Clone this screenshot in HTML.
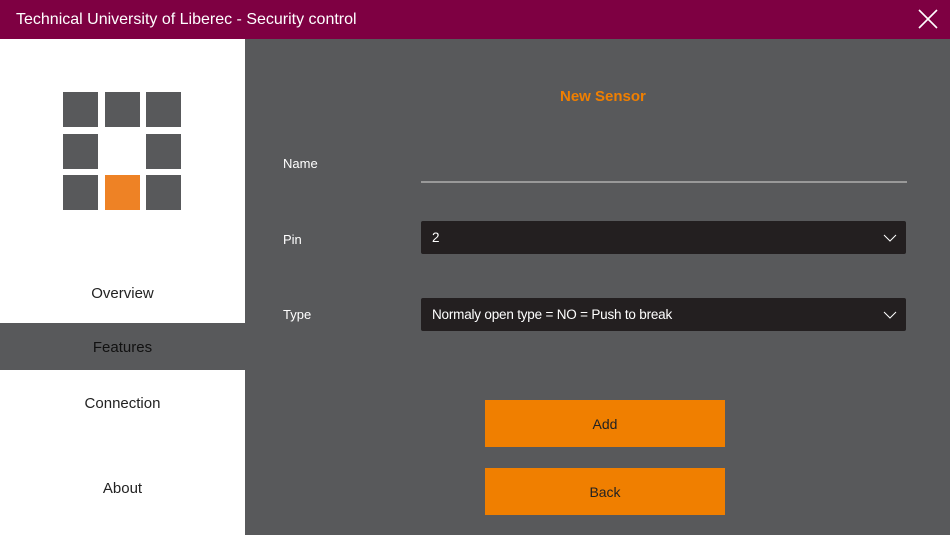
<!DOCTYPE html>
<html><head><style>
*{margin:0;padding:0;box-sizing:border-box}
body{width:950px;height:535px;overflow:hidden;background:#58595b;font-family:"Liberation Sans",sans-serif;position:relative}
.t{position:absolute;left:0;top:0;width:950px;height:39px;background:#7e0042;color:#fff;font-size:16px;line-height:39px;padding-left:16px}
.side{position:absolute;left:0;top:39px;width:245px;height:496px;background:#fff}
.sq{position:absolute;width:35px;height:35px;background:#58595b}
.nav{position:absolute;left:0;width:245px;text-align:center;font-size:15px;color:#222}
.ab{position:absolute;color:#fff;font-size:13px}
.dd{position:absolute;left:421px;width:485px;height:33px;background:#231f20;border-radius:2px;color:#fff;font-size:13.5px;line-height:34px;padding-left:11px;letter-spacing:-0.2px}
.btn{position:absolute;left:485px;width:240px;height:47px;background:#f07f00;text-align:center;line-height:48px;font-size:14px;color:#222}
</style></head><body>
<div class="t">Technical University of Liberec - Security control</div>
<svg style="position:absolute;left:918px;top:9px" width="20" height="20"><path d="M1 1L19 19M19 1L1 19" stroke="#fff" stroke-width="1.6"/></svg>
<div class="side">
<div class="sq" style="left:63px;top:53px"></div><div class="sq" style="left:105px;top:53px"></div><div class="sq" style="left:146px;top:53px"></div>
<div class="sq" style="left:63px;top:95px"></div><div class="sq" style="left:146px;top:95px"></div>
<div class="sq" style="left:63px;top:136px"></div><div class="sq" style="left:105px;top:136px;background:#ee8225"></div><div class="sq" style="left:146px;top:136px"></div>
<div class="nav" style="top:246px">Overview</div>
<div class="nav" style="top:284px;height:47px;line-height:49px;background:#58595b;color:#111">Features</div>
<div class="nav" style="top:356px">Connection</div>
<div class="nav" style="top:441px">About</div>
</div>
<div class="ab" style="left:560px;top:88px;color:#f07f00;font-weight:bold;font-size:15px">New Sensor</div>
<div class="ab" style="left:283px;top:156px">Name</div>
<div style="position:absolute;left:421px;top:181px;width:486px;height:2px;background:#999"></div>
<div class="ab" style="left:283px;top:232px">Pin</div>
<div class="ab" style="left:283px;top:307px">Type</div>
<div class="dd" style="top:221px">2</div>
<div class="dd" style="top:298px">Normaly open type = NO = Push to break</div>
<svg style="position:absolute;left:883px;top:234px" width="14" height="9"><path d="M1 1L7 7L13 1" stroke="#fff" fill="none"/></svg>
<svg style="position:absolute;left:883px;top:311px" width="14" height="9"><path d="M1 1L7 7L13 1" stroke="#fff" fill="none"/></svg>
<div class="btn" style="top:400px">Add</div>
<div class="btn" style="top:468px">Back</div>
</body></html>
